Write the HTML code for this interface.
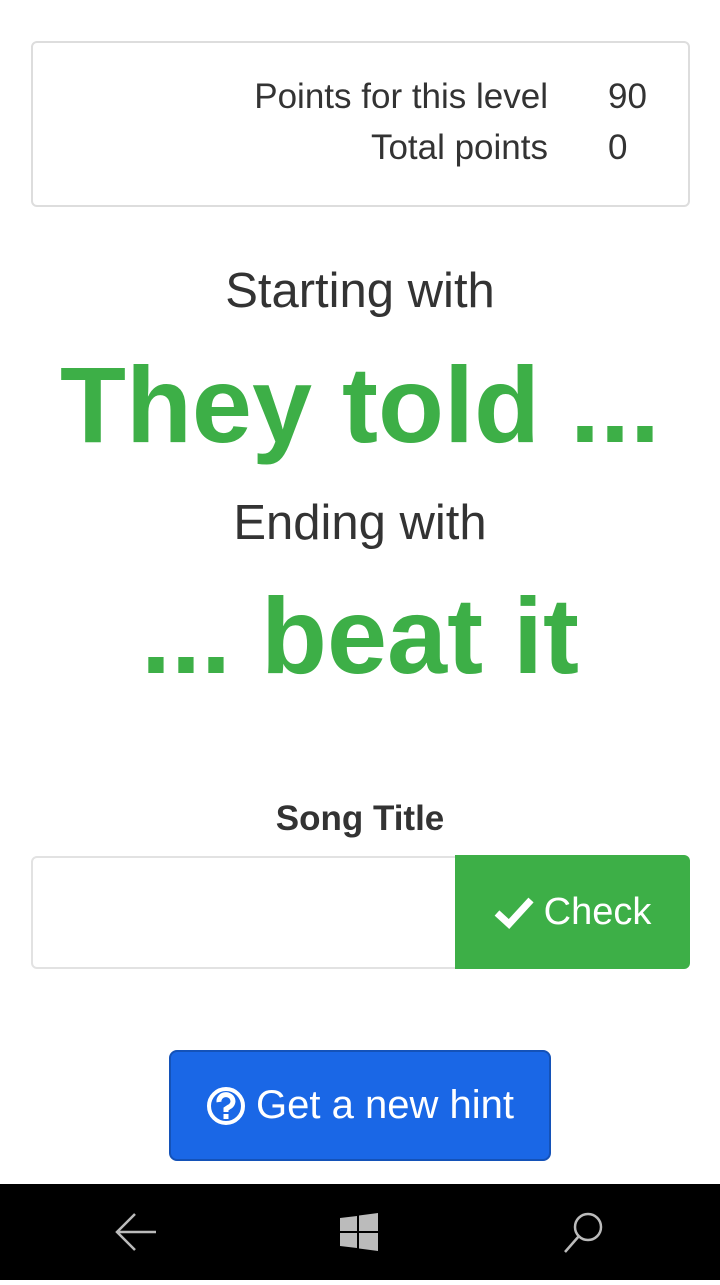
<!DOCTYPE html>
<html><head><meta charset="utf-8"><style>
*{box-sizing:border-box;margin:0;padding:0}
body{width:720px;height:1280px;background:#fff;font-family:"Liberation Sans",sans-serif;color:#333;position:relative;overflow:hidden}
.box{position:absolute;left:31px;top:41px;width:659px;height:166px;border:2px solid #ddd;border-radius:6px}
.r{position:absolute;font-size:35px;white-space:nowrap}
.c{position:absolute;left:0;width:720px;text-align:center;white-space:nowrap}
.g{color:#3daf47;font-weight:bold}
</style></head><body>
<div class="box"></div>
<div class="r" style="right:172px;top:77px">Points for this level</div>
<div class="r" style="left:608px;top:77px">90</div>
<div class="r" style="right:172px;top:128px">Total points</div>
<div class="r" style="left:608px;top:128px">0</div>
<div class="c" style="top:263px;font-size:49px">Starting with</div>
<div class="c g" style="top:345px;font-size:108px;line-height:120px">They told ...</div>
<div class="c" style="top:495px;font-size:49px">Ending with</div>
<div class="c g" style="top:576px;font-size:108px;line-height:120px">... beat it</div>
<div class="c" style="top:799px;font-size:35px;font-weight:bold">Song Title</div>
<div style="position:absolute;left:31px;top:856px;width:430px;height:113px;border:2px solid #e2e2e2;border-radius:6px 0 0 6px"></div>
<div style="position:absolute;left:455px;top:855px;width:235px;height:114px;background:#3daf47;border-radius:0 6px 6px 0;color:#fff;font-size:38px;display:flex;align-items:center;justify-content:center;gap:10px">
<svg width="40" height="34" viewBox="0 0 40 34"><path d="M3 18 L15 29 L37 5" stroke="#fff" stroke-width="7" fill="none"/></svg>Check</div>
<div style="position:absolute;left:169px;top:1050px;width:382px;height:111px;background:#1a67e6;border:2px solid #1452b8;border-radius:8px;color:#fff;font-size:40px;display:flex;align-items:center;justify-content:center;gap:10px">
<svg width="40" height="40" viewBox="0 0 40 40"><circle cx="20" cy="20" r="17" stroke="#fff" stroke-width="4" fill="none"/><path d="M13 16 A7 6.5 0 1 1 23 21 L20 23 L20 26" stroke="#fff" stroke-width="5" fill="none"/><rect x="17.5" y="28" width="5" height="5" fill="#fff"/></svg>Get a new hint</div>
<div style="position:absolute;left:0;top:1184px;width:720px;height:96px;background:#000">
<svg width="720" height="96"><g stroke="#bbb" stroke-width="2.5" fill="none"><path d="M156 48 H117 M135 30 L117 48 L135 66"/><circle cx="588" cy="43" r="13"/><path d="M579 52 L565 68"/></g>
<g fill="#bbb"><path d="M340 34 L357 32 V47 H340Z M359 31.5 L378 29 V47 H359Z M340 49 H357 V64 L340 62Z M359 49 H378 V67 L359 64.5Z"/></g></svg></div>
</body></html>
